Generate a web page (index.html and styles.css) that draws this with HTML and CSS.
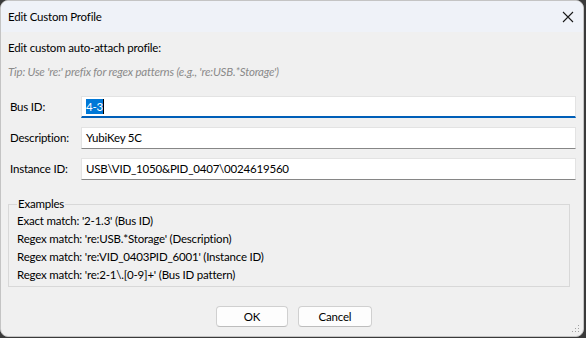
FILE: index.html
```html
<!DOCTYPE html>
<html lang="en">
<head>
<meta charset="UTF-8">
<title>Edit Custom Profile</title>
<link rel="stylesheet" href="styles.css">
</head>
<body>
<div class="window">
    <div class="titlebar">
        <span class="title">Edit Custom Profile</span>
        <svg class="close" width="12" height="12" viewBox="0 0 12 12">
            <path d="M1 1 L11 11 M11 1 L1 11" stroke="#1a1a1a" stroke-width="1.1" fill="none"/>
        </svg>
    </div>
    <div class="content">
        <div class="heading">Edit custom auto-attach profile:</div>
        <div class="tip">Tip: Use 're:' prefix for regex patterns (e.g., 're:USB.*Storage')</div>

        <div class="form">
            <div class="row">
                <label class="label">Bus ID:</label>
                <div class="field focused"><span class="selected">4-3</span><span class="caret"></span></div>
            </div>
            <div class="row">
                <label class="label">Description:</label>
                <div class="field">YubiKey 5C</div>
            </div>
            <div class="row">
                <label class="label">Instance ID:</label>
                <div class="field">USB\VID_1050&amp;PID_0407\0024619560</div>
            </div>
        </div>

        <fieldset class="examples">
            <legend>Examples</legend>
            <div class="example">Exact match: '2-1.3' (Bus ID)</div>
            <div class="example">Regex match: 're:USB.*Storage' (Description)</div>
            <div class="example">Regex match: 're:VID_0403PID_6001' (Instance ID)</div>
            <div class="example">Regex match: 're:2-1\.[0-9]+' (Bus ID pattern)</div>
        </fieldset>

        <div class="buttons">
            <button class="button ok">OK</button>
            <button class="button cancel">Cancel</button>
        </div>
    </div>
    <svg class="grip" width="8" height="8" viewBox="0 0 8 8">
        <rect x="6" y="0" width="1" height="1" fill="#a0a0a0"/>
        <rect x="3" y="3" width="1" height="1" fill="#a0a0a0"/>
        <rect x="6" y="3" width="1" height="1" fill="#a0a0a0"/>
        <rect x="0" y="6" width="1" height="1" fill="#a0a0a0"/>
        <rect x="3" y="6" width="1" height="1" fill="#a0a0a0"/>
        <rect x="6" y="6" width="1" height="1" fill="#a0a0a0"/>
    </svg>
</div>
</body>
</html>
```

FILE: styles.css
```css
body {
    margin: 0;
    background-color: #3a3a3a;
    font-family: Lato, 'Noto Sans', sans-serif;
    font-size: 11.5px;
    letter-spacing: -0.2px;
    color: #000000;
}

.window {
    position: relative;
    width: 582px;
    height: 335px;
    background-color: #f0f0f0;
    border: 1px solid #c4c4c4;
    border-radius: 8px;
    overflow: hidden;
}

.titlebar {
    height: 31px;
    background-color: #eff2f8;
    display: flex;
    align-items: center;
    justify-content: space-between;
    padding: 0 9px 0 7px;
}

.close {
    display: block;
}

.content {
    padding: 8px 7px 0 7px;
}

.heading {
    line-height: 16px;
}

.tip {
    margin-top: 8px;
    line-height: 16px;
    color: #8a8a8a;
    font-style: italic;
}

.form {
    margin-top: 16px;
    display: flex;
    flex-direction: column;
    gap: 9px;
}

.row {
    display: flex;
    align-items: center;
    height: 22px;
}

.label {
    width: 73px;
    padding-left: 2px;
    box-sizing: border-box;
    flex-shrink: 0;
    line-height: 16px;
}

.field {
    width: 496px;
    height: 22px;
    box-sizing: border-box;
    background-color: #ffffff;
    border: 1px solid #e3e3e3;
    border-bottom: 1px solid #868686;
    padding: 0 4px;
    line-height: 20px;
    display: flex;
    align-items: center;
}

.field.focused {
    border-bottom: 2px solid #005fb8;
}

.selected {
    background-color: #0078d7;
    color: #ffffff;
    line-height: 15px;
}

.caret {
    display: inline-block;
    width: 1px;
    height: 15px;
    background-color: #000000;
}

.examples {
    margin: 16px 6px 0 0;
    padding: 0 8px 2px 8px;
    border: 1px solid #d8d8d8;
}

.examples legend {
    padding: 0 1px;
    line-height: 16px;
}

.example {
    line-height: 18px;
}

.buttons {
    margin-top: 19px;
    display: flex;
    justify-content: center;
    gap: 10px;
    padding-left: 4px;
}

.button {
    height: 21px;
    background-color: #fdfdfd;
    border: 1px solid #d0d0d0;
    border-bottom-color: #bdbdbd;
    border-radius: 4px;
    font-family: Lato, 'Noto Sans', sans-serif;
    font-size: 11.5px;
    letter-spacing: -0.2px;
    color: #000000;
    padding: 0;
}

.button.ok {
    width: 72px;
}

.button.cancel {
    width: 74px;
}

.grip {
    position: absolute;
    right: 3px;
    bottom: 3px;
}
```
